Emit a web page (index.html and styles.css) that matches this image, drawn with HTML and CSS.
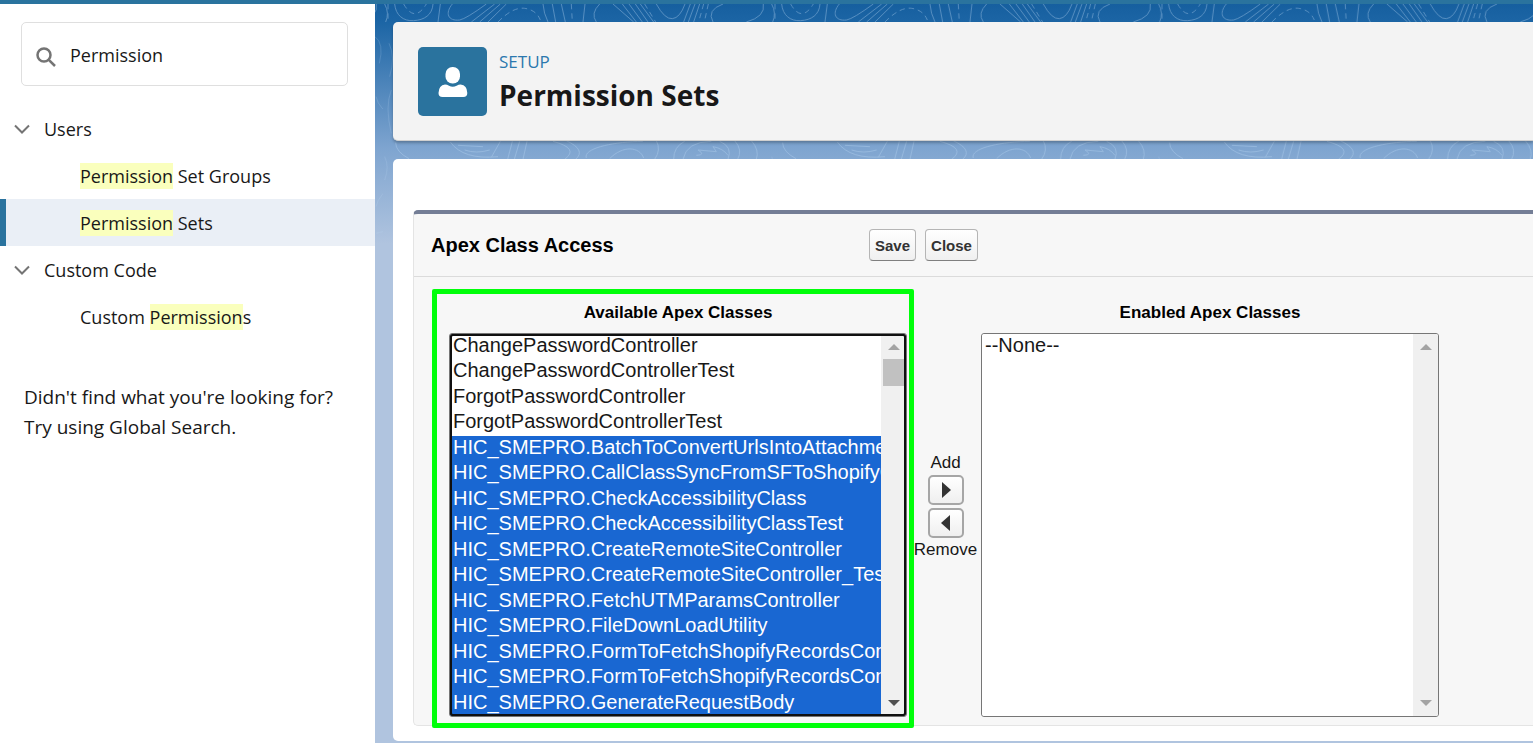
FILE: index.html
```html
<!DOCTYPE html>
<html lang="en">
<head>
<meta charset="utf-8">
<meta name="viewport" content="width=device-width, initial-scale=1">
<title>Permission Sets | Setup</title>
<link rel="stylesheet" href="styles.css">
</head>
<body>
<div class="topbar"></div>
<div class="layout">
  <aside class="sidebar">
    <label class="search">
      <svg class="search-icon" viewBox="0 0 20 20" aria-hidden="true"><circle cx="8" cy="8" r="6.5"/><path d="M12.8 12.8 19 19"/></svg>
      <input type="text" class="search-input" value="Permission" aria-label="Quick Find">
    </label>
    <nav class="tree" aria-label="Setup">
      <button type="button" class="tree-group"><svg class="chevron" viewBox="0 0 16 10" aria-hidden="true"><path d="M1 1.5 8 8.5 15 1.5"/></svg>Users</button>
      <a class="tree-item" href="#groups"><mark>Permission</mark> Set Groups</a>
      <a class="tree-item active" href="#sets" aria-current="page"><mark>Permission</mark> Sets</a>
      <button type="button" class="tree-group"><svg class="chevron" viewBox="0 0 16 10" aria-hidden="true"><path d="M1 1.5 8 8.5 15 1.5"/></svg>Custom Code</button>
      <a class="tree-item" href="#custom">Custom <mark>Permission</mark>s</a>
    </nav>
    <p class="hint">Didn't find what you're looking for?<br>Try using Global Search.</p>
  </aside>
  <main class="main">
    <svg class="contours" aria-hidden="true">
      <defs>
        <pattern id="topo" width="1161" height="900" patternUnits="userSpaceOnUse" patternTransform="translate(8 -4) scale(0.3333)">
          <g class="contour-lines">
            <path d="M5 12Q20 40 8 66M35 12C38 45 60 64 92 62S148 45 150 12M172 12 165 66M208 12C185 40 195 64 230 60Q250 56 310 12M265 66 335 12M290 66 352 12M315 66 370 12M480 12Q482 40 495 66M508 12 518 66M535 12 547 66M606 12 600 66M640 66Q622 40 650 12M690 12 752 66M718 12 760 66M738 12 778 66M757 12 795 66M772 12 812 66M820 12Q845 58 868 56T906 12M922 12 902 66M936 12 916 66M950 12 932 66M1020 12Q970 30 990 66M1090 66Q1148 50 1141 12"/>
            <path class="dash" d="M15 12V66M62 12Q95 70 130 12M345 66Q390 20 425 25T472 60M565 12 568 66M785 12 818 66M962 12 947 66M976 12 964 66M1165 12V66"/>
            <path d="M38 428Q38 455 78 476M202 426Q240 480 345 470M225 436 300 440M245 450Q280 462 320 450M352 424 325 472M388 424 374 478M410 424 394 478M432 424 420 478M510 424Q590 445 545 478M550 422Q610 450 578 478M610 474C600 445 690 425 780 424M680 476C720 435 770 440 782 474M820 422Q835 450 815 478M872 478Q872 440 905 424M900 478Q910 425 985 424M1010 424Q1050 440 1035 478M940 466Q970 465 945 450L1000 455 990 440Q1020 445 1035 466M1055 422Q1080 450 1064 478M1105 422Q1130 450 1120 478"/>
            <path class="faint" d="M1137 110Q1165 130 1150 190M18 130Q38 170 20 230M1140 290Q1150 330 1190 345M25 270Q5 320 25 400M1140 620Q1150 580 1190 560M5 470Q20 500 5 540M1140 700 1180 690"/>
          </g>
        </pattern>
      </defs>
      <rect width="100%" height="260" fill="url(#topo)"/>
    </svg>
    <header class="page-header">
      <span class="page-icon"><svg viewBox="0 0 30 30" aria-hidden="true"><rect x="7.500" y="0" width="14.500" height="16.500" rx="7"/><path d="M7 17.500q2 0 4 1.300 3.800 1.800 7.600 0 2-1.300 4-1.300 6.500.5 6.700 8.500 0 4-4 4H4.500q-4 0-4-4Q.8 18 7 17.500Z"/></svg></span>
      <div>
        <div class="eyebrow">SETUP</div>
        <h1 class="page-title">Permission Sets</h1>
      </div>
    </header>
    <section class="card">
      <div class="panel">
        <div class="panel-header">
          <h2 class="panel-title">Apex Class Access</h2>
          <div class="actions"><button type="button" class="btn">Save</button><button type="button" class="btn">Close</button></div>
        </div>
        <div class="picker">
          <div class="column highlighted">
            <label class="column-title" for="available">Available Apex Classes</label>
            <div class="listbox focused">
              <select id="available" class="list" multiple size="15">
                <option>ChangePasswordController</option>
                <option>ChangePasswordControllerTest</option>
                <option>ForgotPasswordController</option>
                <option>ForgotPasswordControllerTest</option>
                <option selected>HIC_SMEPRO.BatchToConvertUrlsIntoAttachment</option>
                <option selected>HIC_SMEPRO.CallClassSyncFromSFToShopifyClass</option>
                <option selected>HIC_SMEPRO.CheckAccessibilityClass</option>
                <option selected>HIC_SMEPRO.CheckAccessibilityClassTest</option>
                <option selected>HIC_SMEPRO.CreateRemoteSiteController</option>
                <option selected>HIC_SMEPRO.CreateRemoteSiteController_Test</option>
                <option selected>HIC_SMEPRO.FetchUTMParamsController</option>
                <option selected>HIC_SMEPRO.FileDownLoadUtility</option>
                <option selected>HIC_SMEPRO.FormToFetchShopifyRecordsController</option>
                <option selected>HIC_SMEPRO.FormToFetchShopifyRecordsControllerTest</option>
                <option selected>HIC_SMEPRO.GenerateRequestBody</option>
              </select>
              <div class="scrollbar" aria-hidden="true"><span class="arrow up"></span><span class="thumb"></span><span class="arrow down dark"></span></div>
            </div>
          </div>
          <div class="transfer">
            <span id="add-label">Add</span>
            <button type="button" class="move" aria-labelledby="add-label"><svg viewBox="0 0 10 16" aria-hidden="true"><path d="M1 0v16l9-8z"/></svg></button>
            <button type="button" class="move" aria-labelledby="remove-label"><svg viewBox="0 0 10 16" aria-hidden="true"><path d="M9 0v16L0 8z"/></svg></button>
            <span id="remove-label">Remove</span>
          </div>
          <div class="column">
            <label class="column-title" for="enabled">Enabled Apex Classes</label>
            <div class="listbox">
              <select id="enabled" class="list" multiple size="15"><option>--None--</option></select>
              <div class="scrollbar" aria-hidden="true"><span class="arrow up"></span><span class="arrow down"></span></div>
            </div>
          </div>
        </div>
      </div>
    </section>
  </main>
</div>
</body>
</html>
```
FILE: styles.css
```css
* { box-sizing: border-box; }
body {
  margin: 0;
  min-height: 100vh;
  display: flex;
  flex-direction: column;
  font-family: "Open Sans", "Noto Sans", sans-serif;
  font-size: 18px;
  color: #181818;
  overflow: hidden;
}
button, input, select { font: inherit; color: inherit; }
.topbar { height: 4px; background: #2a739e; }
.layout { flex: 1; display: flex; }

/* Sidebar */
.sidebar { flex: 0 0 375px; background: #fff; padding-top: 18px; }
.search {
  display: flex;
  align-items: center;
  gap: 14px;
  height: 64px;
  margin: 0 27px 19px 21px;
  padding: 0 14px;
  border: 1px solid #dfdfdf;
  border-radius: 5px;
}
.search-icon { flex: none; width: 20px; height: 20px; margin-top: 5px; fill: none; stroke: #747474; stroke-width: 2.5; }
.search-input { flex: 1; min-width: 0; border: 0; padding: 1px 0 0; outline: 0; background: none; }
.tree { display: flex; flex-direction: column; }
.tree-group, .tree-item {
  display: flex;
  align-items: center;
  height: 47px;
  border: 0;
  background: none;
  color: inherit;
  text-decoration: none;
  white-space: pre;
}
.tree-group { gap: 14px; padding: 0 14px; }
.tree-item { padding: 0 0 0 74px; border-left: 6px solid transparent; }
.tree-item.active { background: #eaeff6; border-left-color: #2a739e; }
.chevron { width: 16px; height: 10px; fill: none; stroke: #747474; stroke-width: 2; }
mark { background: #faffbd; color: inherit; padding: 1px 0; }
.hint { margin: 42px 24px 0; font-size: 19px; line-height: 30px; white-space: nowrap; }

/* Main area */
.main {
  position: relative;
  flex: 1;
  min-width: 0;
  padding: 18px 0 2px 18px;
  background: linear-gradient(#165f9f, #1c65a5 18px, #7fa5d0 145px, #b0c4df 240px);
}
.contours { position: absolute; inset: 0; width: 100%; height: 260px; }
.contour-lines { fill: none; stroke: #b9d6f2; stroke-width: 3; opacity: 0.38; }
.dash { stroke-dasharray: 16 12; }
.faint { opacity: 0.5; }
.page-header {
  position: relative;
  display: flex;
  gap: 12px;
  height: 119px;
  padding: 25px;
  margin-bottom: 18px;
  background: #f3f3f3;
  border-bottom: 1px solid #d0d0d0;
  border-radius: 5px 0 0 5px;
  box-shadow: 0 2px 3px rgba(0, 0, 0, 0.25);
}
.page-icon {
  display: grid;
  place-items: center;
  width: 69px;
  height: 69px;
  border-radius: 5px;
  background: #2a739e;
}
.page-icon svg { width: 30px; height: 30px; fill: #fff; }
.eyebrow { color: #2b78ae; font-size: 17px; line-height: 30px; }
.page-title { margin: 0; font-size: 28px; line-height: 36px; font-weight: 700; }
.card {
  position: relative;
  padding: 51px 0 15px 20px;
  background: #fff;
  border-radius: 5px 0 0 5px;
  font-family: "Liberation Sans", Arial, sans-serif;
}
.panel {
  background: #f7f7f7;
  border: 1px solid #e4e4e4;
  border-top: 4px solid #747e96;
  border-right: 0;
  border-radius: 5px 0 0 5px;
}
.panel-header {
  display: flex;
  align-items: center;
  height: 63px;
  padding-left: 17px;
  border-bottom: 1px solid #dbdbdb;
}
.panel-title { flex: 0 0 438px; margin: 0; font-size: 20px; line-height: 24px; color: #000; }
.actions { display: flex; gap: 9px; }
.btn {
  height: 32px;
  padding: 0 5px;
  border: 1px solid #b5b5b5;
  border-bottom-color: #7f7f7f;
  border-radius: 4px;
  background: linear-gradient(#fff, #f0f0f0);
  font-size: 15px;
  font-weight: 700;
  color: #333;
}
.picker { display: flex; padding: 26px 0 8px 35px; }
.column { position: relative; flex: 0 0 458px; min-width: 0; display: flex; flex-direction: column; gap: 10px; }
.column-title { text-align: center; font-size: 17px; line-height: 20px; font-weight: 700; color: #000; }
.highlighted::after {
  content: "";
  position: absolute;
  inset: -14px -7px -11px -17px;
  border: 5px solid #00ff0a;
  border-radius: 2px;
  pointer-events: none;
}
.listbox {
  position: relative;
  display: flex;
  height: 384px;
  border: 1px solid #767676;
  border-radius: 3px;
  background: #fff;
  overflow: hidden;
}
.focused::after {
  content: "";
  position: absolute;
  inset: -1px;
  border: 3px solid #101010;
  border-radius: 4px;
  pointer-events: none;
}
.list {
  flex: 1;
  width: 0;
  min-width: 0;
  padding: 0;
  border: 0;
  outline: 0;
  background: #fff;
  font-size: 20px;
  overflow: hidden;
  scrollbar-width: none;
}
.list option { height: 25px; padding: 0 0 0 3px; line-height: 23px; }
.list option:nth-child(even) { height: 26px; }
.list option:checked { color: #fff; background: #1967d2 linear-gradient(#1967d2, #1967d2); }
.scrollbar {
  flex: 0 0 25px;
  display: flex;
  flex-direction: column;
  align-items: center;
  padding: 10px 0;
  background: #f0f0f0;
}
.arrow { border: 6px solid transparent; }
.up { border-top: 0; border-bottom-color: #a3a3a3; }
.down { margin-top: auto; border-bottom: 0; border-top-color: #a3a3a3; }
.dark { border-top-color: #505050; }
.thumb { width: 21px; height: 27px; margin-top: 9px; background: #c1c1c1; }
.transfer {
  flex: 0 0 74px;
  display: flex;
  flex-direction: column;
  align-items: center;
  gap: 3px;
  padding-top: 151px;
  padding-left: 3px;
  font-size: 17px;
  line-height: 18px;
}
.move {
  display: grid;
  place-items: center;
  width: 36px;
  height: 30px;
  padding: 0;
  border: 2px solid #a6a6a6;
  border-radius: 5px;
  background: linear-gradient(#fff, #efefef);
}
.move svg { width: 10px; height: 16px; fill: #333; }
```
